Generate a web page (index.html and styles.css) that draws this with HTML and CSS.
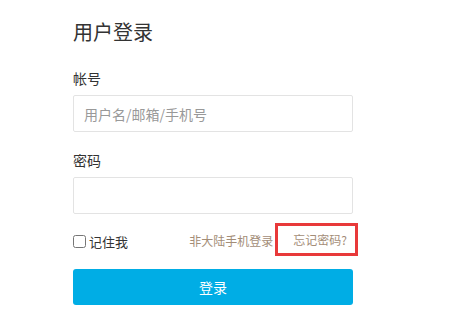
FILE: index.html
```html
<!DOCTYPE html>
<html lang="zh-CN">
<head>
    <meta charset="UTF-8">
    <title>用户登录</title>
    <link rel="stylesheet" href="styles.css">
</head>
<body>
    <div class="login">
        <h1 class="login-title">用户登录</h1>
        <div class="field">
            <label class="field-label" for="account">帐号</label>
            <input class="field-input" id="account" type="text" placeholder="用户名/邮箱/手机号">
        </div>
        <div class="field">
            <label class="field-label" for="password">密码</label>
            <input class="field-input" id="password" type="password">
        </div>
        <div class="options">
            <label class="remember"><input type="checkbox" class="remember-box">记住我</label>
            <div class="links">
                <a href="#" class="link">非大陆手机登录</a>
                <a href="#" class="link link-forgot">忘记密码?</a>
            </div>
        </div>
        <button class="submit" type="button">登录</button>
    </div>
</body>
</html>
```

FILE: styles.css
```css
body {
    margin: 0;
    background-color: #fff;
    font-family: "Microsoft YaHei", "Noto Sans CJK SC", sans-serif;
    color: #333;
}
.login {
    width: 280px;
    margin-left: 73px;
    padding-top: 18px;
}
.login-title {
    margin: 0;
    font-size: 20px;
    font-weight: normal;
    line-height: 28px;
}
.field {
    margin-top: 22px;
}
.field + .field {
    margin-top: 18px;
}
.field-label {
    display: block;
    font-size: 14px;
    line-height: 20px;
    margin-bottom: 7px;
}
.field-input {
    display: block;
    box-sizing: border-box;
    width: 280px;
    height: 37px;
    margin: 0;
    padding: 0 10px;
    border: 1px solid #e3e3e3;
    border-radius: 2px;
    font-family: inherit;
    font-size: 14px;
    color: #333;
    outline: none;
}
.field-input::placeholder {
    color: #999;
}
.options {
    display: flex;
    align-items: center;
    justify-content: space-between;
    margin-top: 9px;
    height: 33px;
}
.remember {
    display: flex;
    align-items: center;
    font-size: 13px;
    color: #333;
    margin-top: 4px;
}
.remember-box {
    width: 13px;
    height: 13px;
    margin: 0 3px 0 0;
}
.links {
    display: flex;
    align-items: center;
    margin-right: -5px;
}
.link {
    font-size: 12px;
    line-height: 16px;
    color: #a38d77;
    text-decoration: none;
}
.links .link:first-child {
    margin-top: 3px;
}
.link-forgot {
    margin-left: 2px;
    padding: 6px 8px 5px 15px;
    border: 3px solid #e8393a;
}
.submit {
    display: block;
    width: 280px;
    height: 36px;
    margin-top: 13px;
    border: none;
    border-radius: 3px;
    background-color: #00ade5;
    color: #fff;
    font-family: inherit;
    font-size: 14px;
    cursor: pointer;
}
```
